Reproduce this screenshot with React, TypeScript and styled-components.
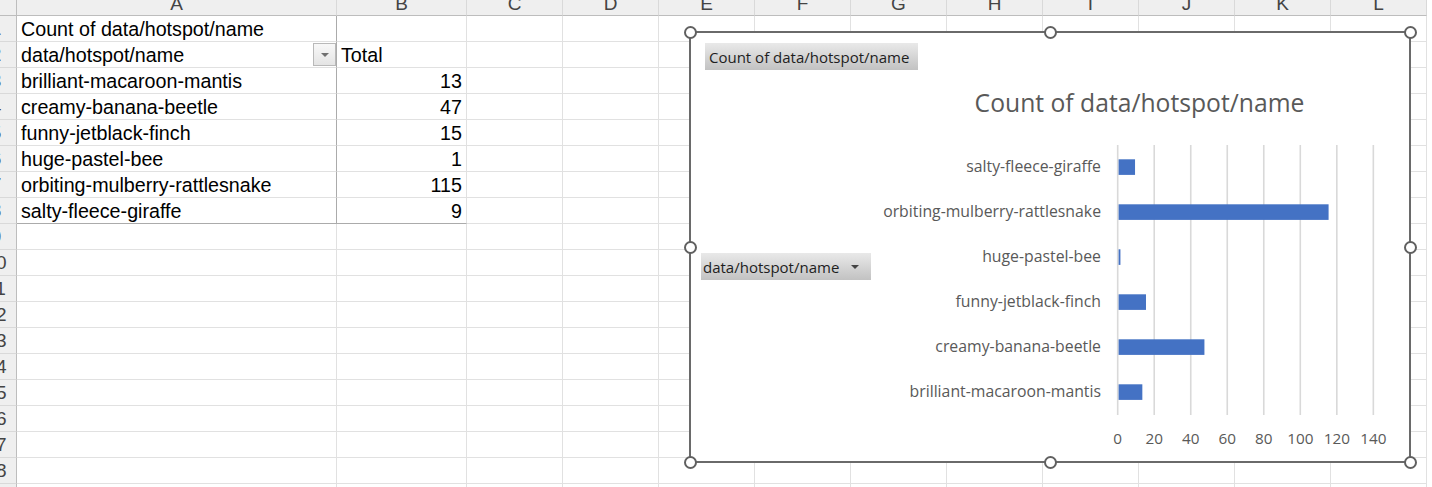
import React from "react";
import styled, { createGlobalStyle } from "styled-components";

const GlobalStyle = createGlobalStyle`
  html, body { margin: 0; padding: 0; background: #ffffff; }
  body { overflow: hidden; }
`;

const COLS = ["A", "B", "C", "D", "E", "F", "G", "H", "I", "J", "K", "L"];
const ROW_COUNT = 19;

const pivot = [
  { name: "brilliant-macaroon-mantis", total: 13 },
  { name: "creamy-banana-beetle", total: 47 },
  { name: "funny-jetblack-finch", total: 15 },
  { name: "huge-pastel-bee", total: 1 },
  { name: "orbiting-mulberry-rattlesnake", total: 115 },
  { name: "salty-fleece-giraffe", total: 9 },
];

const Sheet = styled.div`
  position: relative;
  width: 1432px;
  height: 487px;
  overflow: hidden;
  background: #ffffff;
  font-family: "Liberation Sans", Arial, sans-serif;
`;

const Grid = styled.div`
  display: grid;
  grid-template-columns: 17px 320px 130px repeat(10, 96px);
  grid-template-rows: 16px repeat(${ROW_COUNT}, 26px);
`;

const Corner = styled.div`
  box-sizing: border-box;
  background: #efefef;
  border-right: 1px solid #bdbdbd;
  border-bottom: 1px solid #bdbdbd;
`;

const ColHead = styled.div`
  box-sizing: border-box;
  background: #efefef;
  border-right: 1px solid #d9d9d9;
  border-bottom: 1px solid #bdbdbd;
  color: #444444;
  font-size: 19px;
  line-height: 7px;
  text-align: center;
  overflow: hidden;
`;

const RowHead = styled.div`
  box-sizing: border-box;
  background: #efefef;
  border-right: 1px solid #bdbdbd;
  border-bottom: 1px solid #d9d9d9;
  color: #444444;
  font-size: 19px;
  overflow: hidden;
`;

const RowNum = styled.span`
  display: block;
  width: 40px;
  margin-left: -24px;
  text-align: center;
  line-height: 25px;
`;

const Cell = styled.div<{ $right?: boolean; $strongRight?: boolean; $strongBottom?: boolean }>`
  box-sizing: border-box;
  display: flex;
  align-items: center;
  justify-content: ${(p) => (p.$right ? "flex-end" : "space-between")};
  padding: 1px 4px 0 4px;
  border-right: 1px solid ${(p) => (p.$strongRight ? "#ababab" : "#e1e1e1")};
  border-bottom: 1px solid ${(p) => (p.$strongBottom ? "#ababab" : "#e1e1e1")};
  color: #000000;
  font-size: 19.7px;
  line-height: 24px;
  white-space: nowrap;
  overflow: hidden;
`;

const FilterButton = styled.span`
  box-sizing: border-box;
  width: 23px;
  height: 23px;
  margin: -1px -4px 0 0;
  border: 1px solid #b9b9b9;
  background: linear-gradient(#f8f8f8, #e4e4e4);
  display: flex;
  align-items: center;
  justify-content: center;
`;

const DownArrow = styled.span<{ $color?: string }>`
  width: 0;
  height: 0;
  border-left: 4px solid transparent;
  border-right: 4px solid transparent;
  border-top: 4px solid ${(p) => p.$color || "#6f6f6f"};
`;

/* ---------- Chart ---------- */

const ChartFrame = styled.div`
  position: absolute;
  left: 689px;
  top: 31px;
  width: 722px;
  height: 432px;
  box-sizing: border-box;
  border: 2px solid #6a6a6a;
  background: #ffffff;
  display: flex;
  flex-direction: column;
  font-family: "Open Sans", "Noto Sans", sans-serif;
`;

const Handle = styled.span<{ $h: "l" | "c" | "r"; $v: "t" | "m" | "b" }>`
  position: absolute;
  width: 13px;
  height: 13px;
  box-sizing: border-box;
  border: 2px solid #606060;
  border-radius: 50%;
  background: #ffffff;
  ${(p) => (p.$h === "l" ? "left: -7.5px;" : p.$h === "r" ? "right: -7.5px;" : "left: calc(50% - 6.5px);")}
  ${(p) => (p.$v === "t" ? "top: -7.5px;" : p.$v === "b" ? "bottom: -7.5px;" : "top: calc(50% - 6.5px);")}
`;

const FieldButton = styled.div<{ $ml: number; $mt: number; $pl: number; $pr: number }>`
  align-self: flex-start;
  display: flex;
  align-items: center;
  gap: 12px;
  height: 27px;
  margin: ${(p) => p.$mt}px 0 0 ${(p) => p.$ml}px;
  padding: 0 ${(p) => p.$pr}px 0 ${(p) => p.$pl}px;
  background: linear-gradient(#e9e9e9, #c2c2c2);
  color: #1e1e1e;
  font-size: 15px;
  white-space: nowrap;
`;

const ChartTitle = styled.div`
  margin: 17px 0 0 179px;
  text-align: center;
  color: #595959;
  font-size: 24.7px;
  line-height: 32px;
  white-space: nowrap;
`;

const ChartBody = styled.div`
  display: flex;
  margin-top: 14px;
`;

const LegendCol = styled.div`
  width: 180px;
  display: flex;
  flex-direction: column;
`;

const Plot = styled.svg`
  display: block;
  font-family: "Open Sans", "Noto Sans", sans-serif;
`;

const X0 = 246.7;
const STEP = 36.52;
const TOP = 12;
const BOTTOM = 282;
const BAND = (BOTTOM - TOP) / 6;

function BarChart() {
  const cats = [...pivot].reverse();
  const ticks = [0, 20, 40, 60, 80, 100, 120, 140];
  return (
    <Plot width={538} height={328} viewBox="0 0 538 328">
      {ticks.map((t, i) => (
        <line
          key={t}
          x1={X0 + STEP * i}
          x2={X0 + STEP * i}
          y1={TOP}
          y2={BOTTOM}
          stroke="#d9d9d9"
          strokeWidth={1.6}
        />
      ))}
      {cats.map((c, i) => {
        const cy = TOP + BAND * i + BAND / 2;
        return (
          <g key={c.name}>
            <rect x={X0 + 0.9} y={cy - 8.2} width={(c.total * STEP) / 20} height={15.6} fill="#4472c4" />
            <text x={230} y={cy - 1.5} textAnchor="end" dominantBaseline="central" fill="#595959" fontSize={15.8}>
              {c.name}
            </text>
          </g>
        );
      })}
      {ticks.map((t, i) => (
        <text
          key={"l" + t}
          x={X0 + STEP * i}
          y={305}
          textAnchor="middle"
          dominantBaseline="central"
          fill="#595959"
          fontSize={15.3}
        >
          {t}
        </text>
      ))}
    </Plot>
  );
}

function Chart() {
  return (
    <ChartFrame>
      <FieldButton $ml={14} $mt={10} $pl={4} $pr={9}>
        Count of data/hotspot/name
      </FieldButton>
      <ChartTitle>Count of data/hotspot/name</ChartTitle>
      <ChartBody>
        <LegendCol>
          <FieldButton $ml={10} $mt={120} $pl={2} $pr={12}>
            data/hotspot/name
            <DownArrow $color="#444444" />
          </FieldButton>
        </LegendCol>
        <BarChart />
      </ChartBody>
      <Handle $h="l" $v="t" />
      <Handle $h="c" $v="t" />
      <Handle $h="r" $v="t" />
      <Handle $h="l" $v="m" />
      <Handle $h="r" $v="m" />
      <Handle $h="l" $v="b" />
      <Handle $h="c" $v="b" />
      <Handle $h="r" $v="b" />
    </ChartFrame>
  );
}

function cellContent(row: number, col: number): React.ReactNode {
  if (col === 0) {
    if (row === 1) return <span>Count of data/hotspot/name</span>;
    if (row === 2)
      return (
        <>
          <span>data/hotspot/name</span>
          <FilterButton>
            <DownArrow />
          </FilterButton>
        </>
      );
    const p = pivot[row - 3];
    if (p) return <span>{p.name}</span>;
  }
  if (col === 1) {
    if (row === 2) return <span>Total</span>;
    const p = pivot[row - 3];
    if (p) return <span>{p.total}</span>;
  }
  return null;
}

export default function App() {
  const rows = Array.from({ length: ROW_COUNT }, (_, i) => i + 1);
  return (
    <>
      <GlobalStyle />
      <Sheet>
        <Grid>
          <Corner />
          {COLS.map((c) => (
            <ColHead key={c}>{c}</ColHead>
          ))}
          {rows.map((r) => (
            <React.Fragment key={r}>
              <RowHead>
                <RowNum>{r}</RowNum>
              </RowHead>
              {COLS.map((c, ci) => (
                <Cell
                  key={c}
                  $right={ci === 1 && r >= 3}
                  $strongRight={ci === 0 && r <= 8}
                  $strongBottom={ci <= 1 && r === 8}
                >
                  {cellContent(r, ci)}
                </Cell>
              ))}
            </React.Fragment>
          ))}
        </Grid>
        <Chart />
      </Sheet>
    </>
  );
}
